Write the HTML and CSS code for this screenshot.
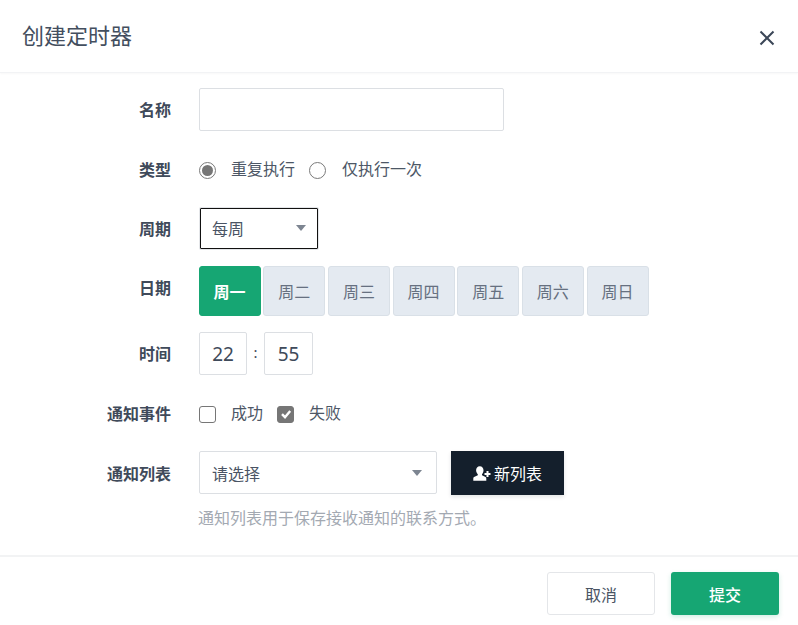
FILE: index.html
```html
<!DOCTYPE html>
<html lang="zh">
<head>
<meta charset="utf-8">
<title>创建定时器</title>
<link rel="stylesheet" href="styles.css">
</head>
<body>
<div class="dialog">
  <header class="head">
    <h1 class="title">创建定时器</h1>
    <svg class="close" width="16" height="16" viewBox="0 0 16 16"><path d="M1.5 1.5L14.5 14.5M14.5 1.5L1.5 14.5" stroke="#3b4657" stroke-width="2" fill="none"/></svg>
  </header>
  <main class="form">
    <div class="row row-name">
      <label class="label">名称</label>
      <div class="input name"></div>
    </div>
    <div class="row row-type">
      <label class="label">类型</label>
      <div class="opts">
        <span class="radio on"></span><span class="opt opt-a">重复执行</span>
        <span class="radio"></span><span class="opt opt-b">仅执行一次</span>
      </div>
    </div>
    <div class="row row-period">
      <label class="label">周期</label>
      <div class="select period"><span>每周</span><i class="caret"></i></div>
    </div>
    <div class="row row-date">
      <label class="label label-up">日期</label>
      <div class="days">
        <span class="day active">周一</span><span class="day">周二</span><span class="day">周三</span><span class="day">周四</span><span class="day">周五</span><span class="day">周六</span><span class="day">周日</span>
      </div>
    </div>
    <div class="row row-time">
      <label class="label">时间</label>
      <div class="time">
        <span class="input num n1">22</span><span class="colon">:</span><span class="input num n2">55</span>
      </div>
    </div>
    <div class="row row-event">
      <label class="label">通知事件</label>
      <div class="opts">
        <span class="check"></span><span class="opt opt-c">成功</span>
        <span class="check on"><svg width="12" height="12" viewBox="0 0 12 12"><path d="M2 6.2L5 9.2L10.200 3" stroke="#fff" stroke-width="2.400" fill="none"/></svg></span><span class="opt">失败</span>
      </div>
    </div>
    <div class="row row-list">
      <label class="label label-down">通知列表</label>
      <div class="select list"><span>请选择</span><i class="caret"></i></div>
      <button class="btn-new" type="button">
        <svg width="18" height="15" viewBox="0 0 18 15"><path d="M6.800 0.200c2.300 0 3.700 1.800 3.700 4.100 0 1.700-.7 3.100-1.500 3.900v1.100l3.500 1.800c.6.300.8.800.8 1.300v2.300H0.300v-2.300c0-.5.2-1 .8-1.300l3.700-1.800V8.200C4 7.400 3.100 6 3.100 4.300c0-2.300 1.400-4.100 3.700-4.100z" fill="#fff"/><path d="M14.500 5v6M11.500 8h6" stroke="#fff" stroke-width="2" fill="none"/></svg>
        <span>新列表</span>
      </button>
    </div>
    <p class="hint">通知列表用于保存接收通知的联系方式。</p>
  </main>
  <footer class="foot">
    <button class="btn cancel" type="button">取消</button>
    <button class="btn submit" type="button">提交</button>
  </footer>
</div>
</body>
</html>
```
FILE: styles.css
```css
* { box-sizing: border-box; }
html, body { margin: 0; padding: 0; background: #fff; }
body {
  width: 798px;
  height: 625px;
  overflow: hidden;
  font-family: "Noto Sans", "Noto Sans CJK SC", sans-serif;
  font-size: 16px;
  color: #4a5464;
}
.dialog { display: flex; flex-direction: column; height: 625px; }
.head {
  height: 73px;
  flex: none;
  display: flex;
  justify-content: space-between;
  padding: 19px 23px 0 22px;
  border-bottom: 1px solid #f2f3f5;
  box-shadow: 0 1px 2px rgba(0, 0, 0, .03);
}
.title { margin: 0; font-size: 22px; line-height: 32px; font-weight: 400; color: #434e5e; }
.close { margin-top: 11px; }
.form { flex: 1; padding-top: 15px; }
.row { display: flex; align-items: center; }
.label {
  width: 171px;
  flex: none;
  text-align: right;
  font-size: 16px;
  font-weight: 700;
  color: #3f4a5a;
  line-height: 24px;
}
.label-up { margin-top: -6px; }
.label-down { margin-top: 2px; }
.row > :nth-child(2) { margin-left: 28px; }
.row-name { height: 43px; }
.row-type { height: 30px; margin-top: 24px; }
.row-period { height: 41px; margin-top: 23px; }
.row-date { height: 50px; margin-top: 17px; }
.row-time { height: 43px; margin-top: 16px; }
.row-event { height: 30px; margin-top: 24px; }
.row-list { height: 44px; margin-top: 22px; }
.input {
  display: block;
  background: #fff;
  border: 1px solid #dcdfe3;
  border-radius: 2px;
}
.name { width: 305px; height: 43px; }
.opts { display: flex; align-items: center; }
.opt { line-height: 24px; margin-top: -3px; color: #4d5766; }
.opt-a { margin-left: 15px; margin-right: 14px; }
.opt-b { margin-left: 16px; }
.opt-c { margin-left: 15px; margin-right: 14px; }
.radio {
  width: 17px;
  height: 17px;
  border: 1px solid #7a7a7a;
  border-radius: 50%;
  background: #fff;
  position: relative;
}
.radio.on::after {
  content: "";
  position: absolute;
  inset: 2px;
  border-radius: 50%;
  background: #767676;
}
.check {
  width: 17px;
  height: 17px;
  border: 1px solid #767676;
  border-radius: 3px;
  background: #fff;
  display: flex;
  align-items: center;
  justify-content: center;
}
.check.on { background: #767676; margin-right: 15px; }
.select {
  display: flex;
  align-items: center;
  justify-content: space-between;
  background: #fff;
  border: 1px solid #dcdfe3;
  border-radius: 2px;
  color: #4a5464;
  padding: 0 14px 0 12px;
}
.row > .select.period {
  width: 118px;
  height: 41px;
  margin-left: 29px;
  border: 1.5px solid #111;
  border-radius: 1px;
  padding: 0 11px 2px 11px;
  box-shadow: 0 0 0 1px #e4e6e9;
}
.select.list { width: 238px; height: 43px; align-self: flex-start; }
.caret {
  width: 0;
  height: 0;
  border-left: 5.500px solid transparent;
  border-right: 5.500px solid transparent;
  border-top: 6px solid #7d8591;
}
.row > .days { display: flex; gap: 2.670px; margin-left: 27.600px; }
.day {
  width: 62px;
  height: 50px;
  display: flex;
  align-items: center;
  justify-content: center;
  background: #e4eaf1;
  border: 1px solid #d9e0e7;
  border-radius: 3px;
  color: #667080;
}
.day.active {
  background: #16a673;
  border-color: #16a673;
  color: #fff;
  font-weight: 700;
}
.time { display: flex; align-items: center; }
.num {
  height: 43px;
  display: flex;
  align-items: center;
  justify-content: center;
  font-size: 19px;
  color: #3f4a5a;
}
.n1 { width: 48px; }
.n2 { width: 49px; }
.colon { width: 17px; text-align: center; margin-top: -3px; color: #3f4a5a; font-size: 15px; }
.btn-new {
  width: 113px;
  height: 44px;
  margin-left: 14px;
  border: 0;
  background: #141f2c;
  color: #fff;
  font: inherit;
  display: flex;
  align-items: center;
  justify-content: center;
  gap: 3px;
  padding: 0;
  box-shadow: 0 2px 4px rgba(20, 31, 44, .12);
}
.hint { margin: 12px 0 0 198px; line-height: 22px; font-size: 16px; color: #a3a9b2; }
.foot {
  height: 70px;
  flex: none;
  display: flex;
  align-items: flex-start;
  justify-content: flex-end;
  gap: 16px;
  padding: 15px 19px 0 0;
  border-top: 2px solid #f2f3f4;
}
.btn {
  height: 43px;
  font: inherit;
  border-radius: 3px;
  padding: 0;
}
.cancel { width: 108px; background: #fff; border: 1px solid #e4e6e9; color: #4a5464; }
.submit { width: 108px; background: #16a673; border: 0; color: #fff; font-weight: 500; box-shadow: 0 2px 5px rgba(22, 166, 115, .2); }
```
